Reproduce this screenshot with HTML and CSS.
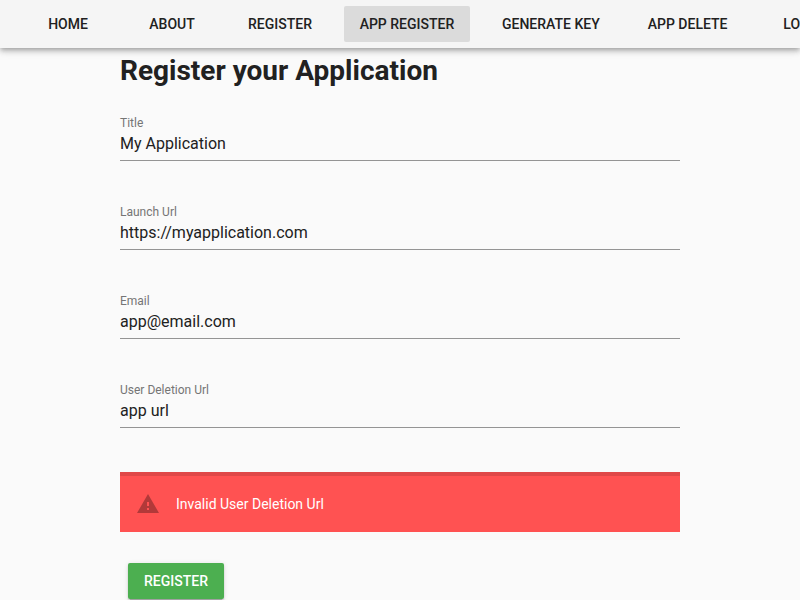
FILE: index.html
```html
<!DOCTYPE html>
<html lang="en">
<head>
<meta charset="utf-8">
<title>Register your Application</title>
<link rel="stylesheet" href="styles.css">
</head>
<body>
<nav class="toolbar">
  <a class="btn">Home</a>
  <a class="btn">About</a>
  <a class="btn">Register</a>
  <a class="btn active">App Register</a>
  <a class="btn">Generate Key</a>
  <a class="btn">App Delete</a>
  <a class="btn">Login</a>
</nav>
<main class="container">
  <h1>Register your Application</h1>
  <div class="field"><label>Title</label><div class="value">My Application</div></div>
  <div class="field"><label>Launch Url</label><div class="value">https://myapplication.com</div></div>
  <div class="field"><label>Email</label><div class="value">app@email.com</div></div>
  <div class="field"><label>User Deletion Url</label><div class="value">app url</div></div>
  <div class="alert">
    <svg class="icon" viewBox="0 0 24 24"><path d="M1 21h22L12 2 1 21zm12-3h-2v-2h2v2zm0-4h-2v-4h2v4z"/></svg>
    <div>Invalid User Deletion Url</div>
  </div>
  <button class="submit">Register</button>
</main>
</body>
</html>
```

FILE: styles.css
```css
* { box-sizing: border-box; }
html { overflow: hidden; }
body {
  margin: 0;
  height: 600px;
  overflow: hidden;
  background: #fafafa;
  color: #212121;
  font: 400 16px/1.5 Roboto, sans-serif;
}
.toolbar {
  position: relative;
  display: flex;
  align-items: center;
  height: 48px;
  padding-left: 16px;
  background: #f5f5f5;
  box-shadow: 0 2px 4px -1px rgba(0,0,0,.2), 0 4px 5px rgba(0,0,0,.14), 0 1px 10px rgba(0,0,0,.12);
}
.btn {
  flex: none;
  display: flex;
  align-items: center;
  justify-content: center;
  min-width: 88px;
  height: 36px;
  margin: 0 8px;
  padding: 0 16px;
  border-radius: 2px;
  font-size: 14px;
  font-weight: 500;
  text-transform: uppercase;
}
.active { width: 126px; padding: 0 15px; white-space: nowrap; background: #dbdbdb; }
.container { width: 560px; margin: 0 auto; }
h1 { margin: 0; padding-top: 2px; height: 67px; font-size: 28px; line-height: 42px; font-weight: 700; }
.field { height: 89px; }
.field label { display: block; height: 16px; font-size: 12px; line-height: 16px; color: #757575; }
.value { height: 30px; line-height: 26px; border-bottom: 1px solid #949494; }
.alert {
  display: flex;
  align-items: center;
  gap: 16px;
  height: 60px;
  margin-top: 1px;
  padding: 0 16px;
  border-top: 4px solid rgba(0,0,0,.12);
  background: #ff5252;
  color: #fff;
  font-size: 14px;
}
.icon { width: 24px; height: 24px; fill: rgba(0,0,0,.3); }
.submit {
  display: block;
  width: 96px;
  height: 36px;
  margin: 31px 8px 0;
  padding: 0;
  border: 0;
  border-radius: 2px;
  background: #4caf50;
  color: #fff;
  font: 500 14px Roboto, sans-serif;
  text-transform: uppercase;
  box-shadow: 0 3px 1px -2px rgba(0,0,0,.2), 0 2px 2px rgba(0,0,0,.14), 0 1px 5px rgba(0,0,0,.12);
}
```
